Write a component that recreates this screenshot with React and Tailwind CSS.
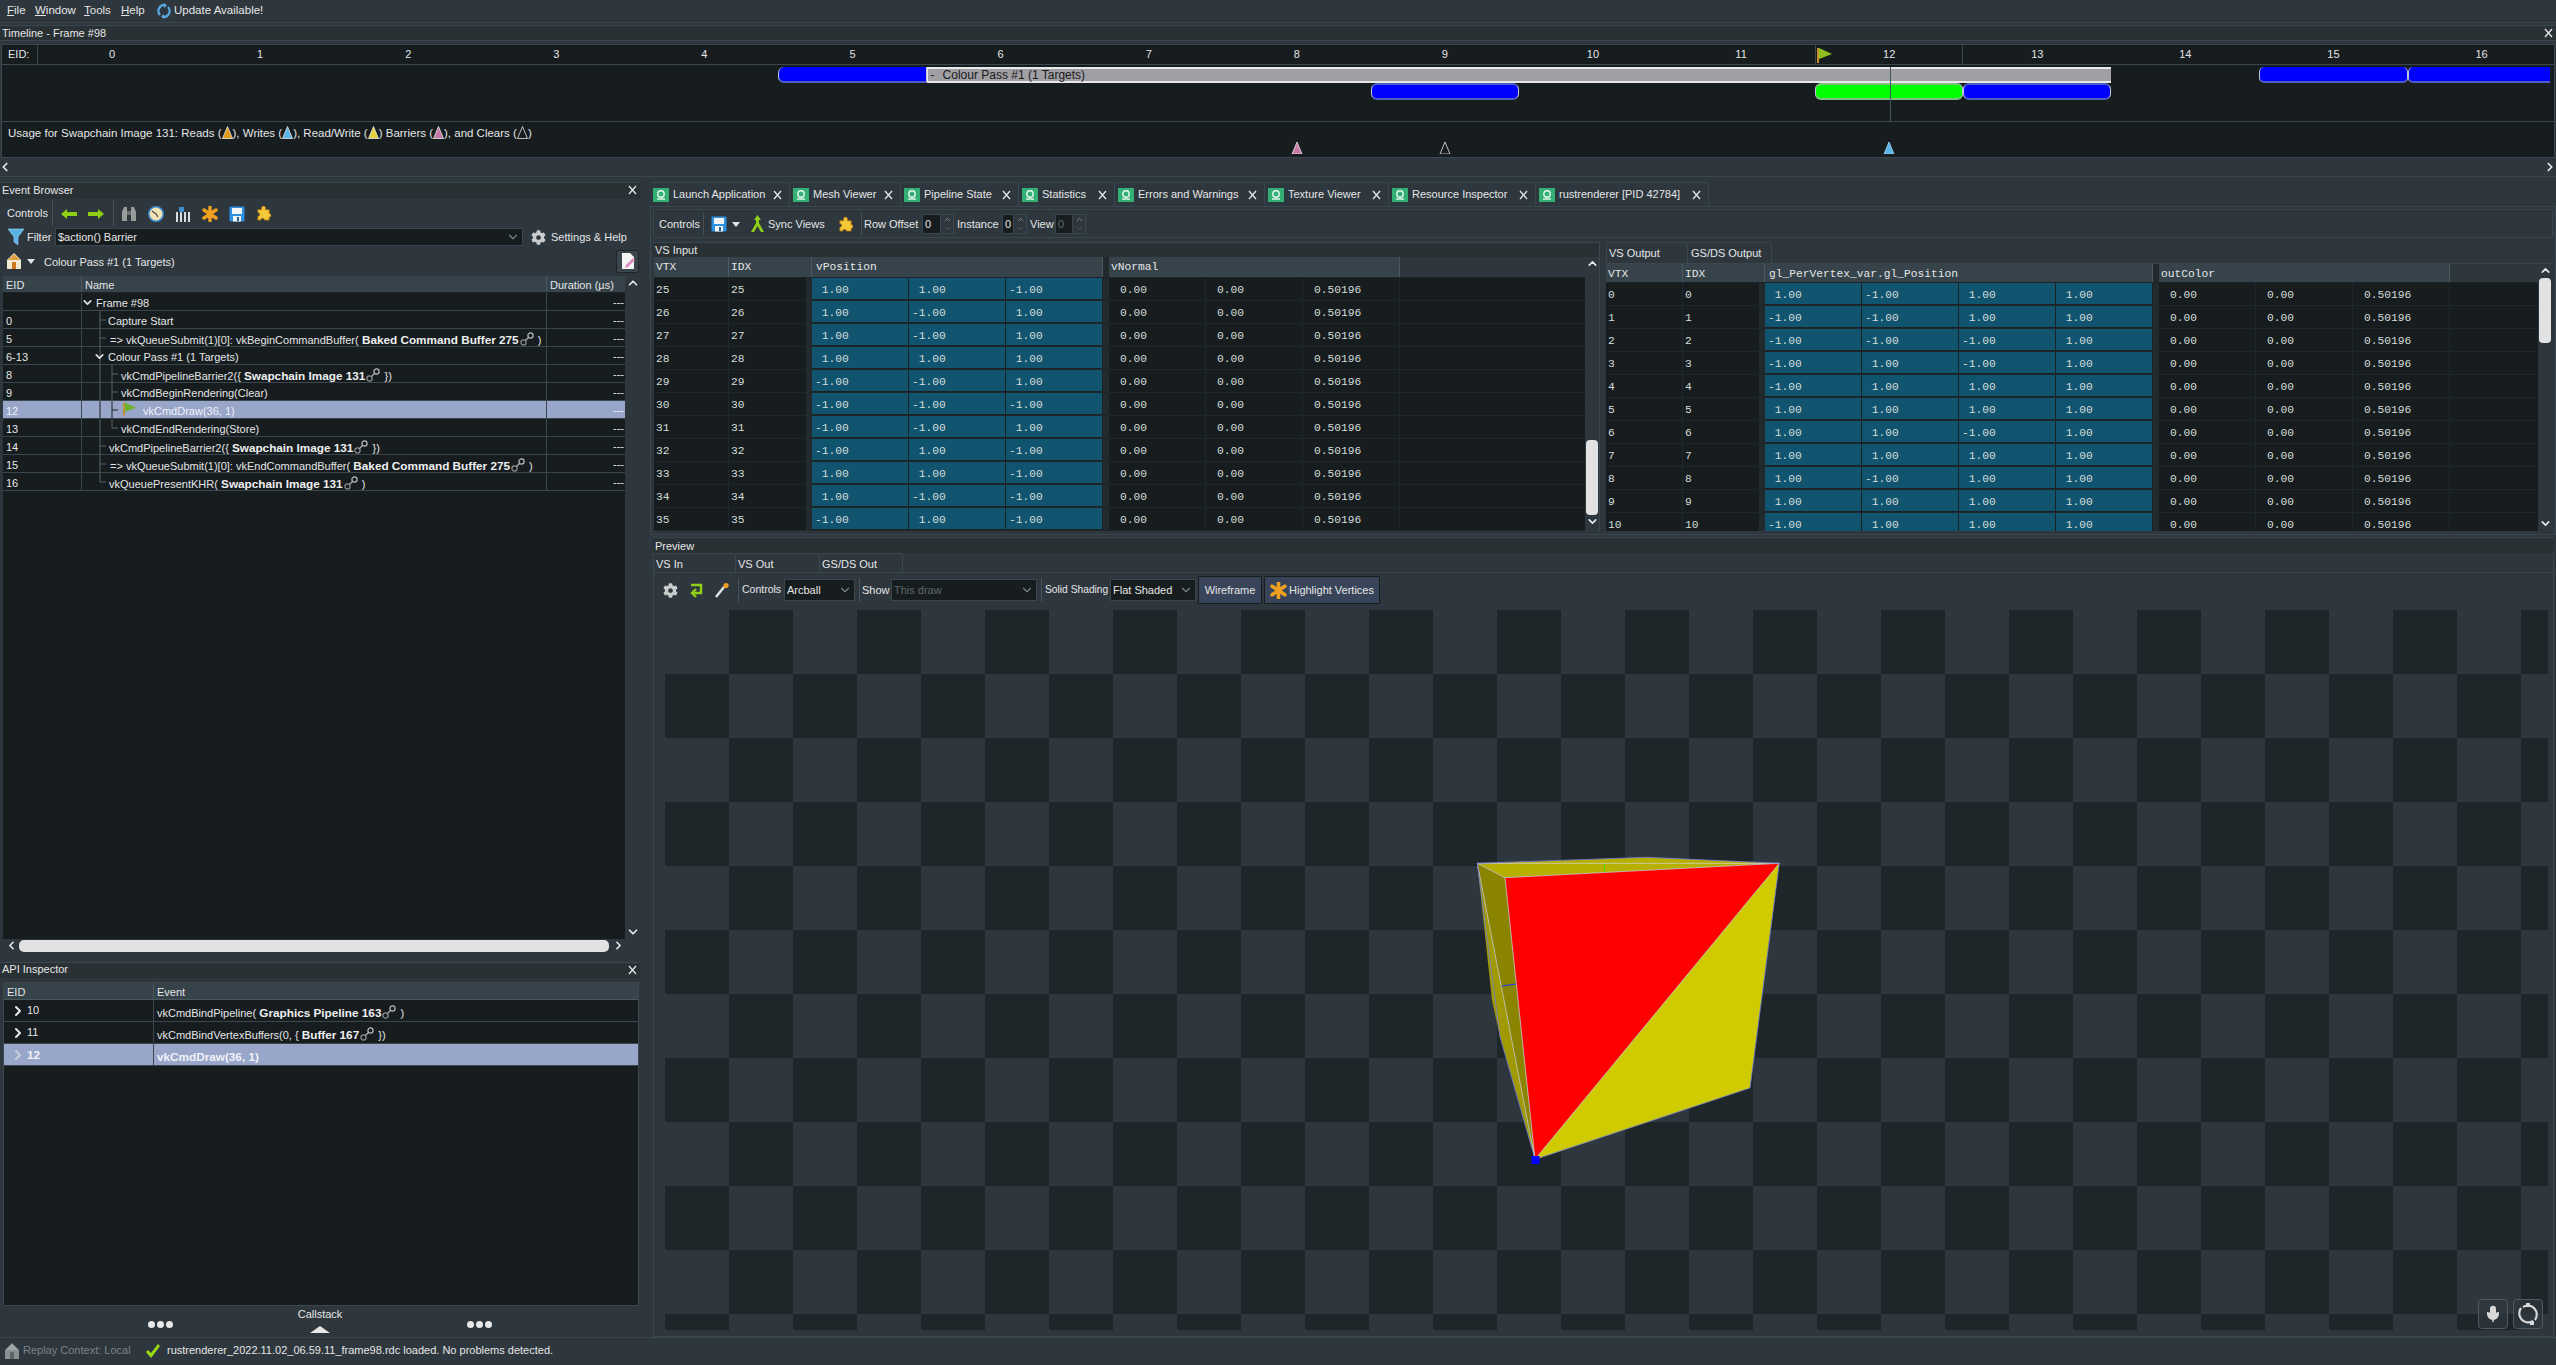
import React from "react";
import { ChevronDown, ChevronLeft, ChevronRight, ChevronUp, Mic } from "lucide-react";
import { FaCog } from "react-icons/fa";

// small drawn icons
const Arrow = ({ flip }) => (
  <svg width="16" height="10" viewBox="0 0 16 10" className={flip ? "-scale-x-100" : ""}>
    <path d="M0 5 L6 0 V3 H16 V7 H6 V10 Z" fill="#8fd014" />
  </svg>
);
const Binoculars = () => (
  <svg width="16" height="16" viewBox="0 0 16 16">
    <path d="M1 6 L3 1 H6 V15 H1 Z M10 1 H13 L15 6 V15 H10 Z" fill="#9a9c9c" />
    <path d="M6 5 H10 V9 H6 Z" fill="#6c6e6e" />
  </svg>
);
const Clock = () => (
  <svg width="16" height="16" viewBox="0 0 16 16">
    <circle cx="8" cy="8" r="7.2" fill="#f3e3b4" stroke="#3d8fd0" strokeWidth="1.6" />
    <path d="M4 5 L8 8 L10 11" stroke="#4a4a4a" strokeWidth="1.2" fill="none" />
  </svg>
);
const Bars = () => (
  <svg width="16" height="16" viewBox="0 0 16 16">
    <path d="M1 6 H3 V16 H1 Z M5 6 H7 V16 H5 Z M9 6 H11 V16 H9 Z M13 6 H15 V16 H13 Z" fill="#d8dcdc" />
    <path d="M4 1 H9 V5 L6.5 7 L4 5 Z" fill="#3d8fd0" />
  </svg>
);
const Star = ({ size = 16 }) => (
  <svg width={size} height={size} viewBox="0 0 16 16">
    <path d="M8 8 L8 1 M8 8 L14 4 M8 8 L14 12 M8 8 L8 15 M8 8 L2 12 M8 8 L2 4" stroke="#f0a020" strokeWidth="3.4" strokeLinecap="round" />
  </svg>
);
const Floppy = () => (
  <svg width="16" height="16" viewBox="0 0 16 16">
    <rect x="0.5" y="0.5" width="15" height="15" rx="1" fill="#2f8fe0" />
    <rect x="3" y="2" width="10" height="6" fill="#f2f4f6" />
    <rect x="4" y="10" width="8" height="5.5" fill="#f2f4f6" />
    <rect x="8" y="11" width="2" height="4" fill="#2a5c90" />
  </svg>
);
const Puzzle = () => (
  <svg width="15" height="15" viewBox="0 0 16 16">
    <path d="M6 2 a2 2 0 0 1 4 0 V4 H14 V8 a2 2 0 0 1 0 4 V15 H9 a2 2 0 0 0 -4 0 H2 V11 a2 2 0 0 0 0 -4 V4 H6 Z" fill="#f5c838" stroke="#b87a10" strokeWidth="0.8" />
  </svg>
);
const Funnel = () => (
  <svg width="16" height="18" viewBox="0 0 16 18">
    <path d="M0 1 H16 L10 9 V17 L6 14 V9 Z" fill="#5ab4e6" stroke="#9ad4f6" strokeWidth="0.6" />
  </svg>
);
const Home = ({ dim }) => (
  <svg width="14" height="16" viewBox="0 0 14 16">
    <path d="M7 0 L14 7 V16 H0 V7 Z" fill={dim ? "#8a8f92" : "#f0e8d0"} />
    <path d="M5 9 H9 V16 H5 Z" fill={dim ? "#5f6569" : "#d07820"} />
    <path d="M7 1 L13 7 H1 Z" fill={dim ? "#a0a5a8" : "#e0a040"} />
  </svg>
);
const Flag = ({ w = 16, h = 15, color = "#7cc020" }) => (
  <svg width={w} height={h} viewBox="0 0 16 15">
    <rect x="0" y="0" width="2" height="15" fill="#c89030" />
    <path d="M2 0 L15 6 L2 11 Z" fill={color} />
  </svg>
);
const LinkIcon = () => (
  <svg width="14" height="14" viewBox="0 0 14 14" className="inline-block -mt-[4px] mx-[1px] align-middle">
    <circle cx="10.5" cy="3.5" r="2.6" fill="none" stroke="#b8bcbe" strokeWidth="1.2" />
    <circle cx="3.5" cy="10.5" r="2.6" fill="none" stroke="#8c9092" strokeWidth="1.2" />
    <path d="M8.5 5.5 L5.5 8.5" stroke="#a8acae" strokeWidth="1.2" />
  </svg>
);
const Tri = ({ fill, stroke = "#e8e8e8" }) => (
  <svg width="11" height="13" viewBox="0 0 11 13" className="inline-block align-[-2px]">
    <path d="M5.5 0.5 L10.5 12.5 H0.5 Z" fill={fill} stroke={stroke} strokeWidth="0.8" />
  </svg>
);
const Marker = ({ fill, stroke, className }) => (
  <svg width="12" height="12" viewBox="0 0 12 12" className={className}>
    <path d="M6 0 L11 12 H1 Z" fill={fill} stroke={stroke} strokeWidth="0.8" />
  </svg>
);
const TabIcon = () => (
  <svg width="16" height="14" viewBox="0 0 16 14" className="shrink-0">
    <rect width="16" height="14" fill="#35b074" />
    <circle cx="8" cy="6" r="3.2" fill="none" stroke="#e8f8f0" strokeWidth="1.4" />
    <path d="M4 11 H12" stroke="#e8f8f0" strokeWidth="1.4" />
  </svg>
);
const Close = ({ className = "" }) => (
  <svg width="9" height="10" viewBox="0 0 9 10" className={className}>
    <path d="M1 1 L8 9 M8 1 L1 9" stroke="#e4e6e8" strokeWidth="1.3" />
  </svg>
);

const PanelTitle = ({ title, close, className = "" }) => (
  <div className={`flex items-center justify-between bg-[#2a3135] pl-[2px] pr-[3px] ${className}`}>
    <span>{title}</span>
    {close && <Close />}
  </div>
);

const B = ({ children }) => <b className="font-bold text-[11.75px] text-[#eef0f0]">{children}</b>;

// guide: what the tree lines in the Name column look like for this row
const eventRows = [
  { eid: "", text: "Frame #98", pad: 14, chevron: 5 },
  { eid: "0", text: "Capture Start", pad: 26, guide: "M18 0 V18 M18 9 H24" },
  { eid: "5", pad: 28, guide: "M18 0 V18 M18 9 H24", text: <>=&gt; vkQueueSubmit(1)[0]: vkBeginCommandBuffer(<B> Baked Command Buffer 275</B><LinkIcon /> )</> },
  { eid: "6-13", text: "Colour Pass #1 (1 Targets)", pad: 26, chevron: 17, guide: "M18 0 V18" },
  { eid: "8", pad: 39, guide: "M18 0 V18 M30 0 V18 M30 9 H36", text: <>vkCmdPipelineBarrier2({"{"} <B>Swapchain Image 131</B><LinkIcon /> {"}"})</> },
  { eid: "9", pad: 39, guide: "M18 0 V18 M30 0 V18 M30 9 H36", text: "vkCmdBeginRendering(Clear)" },
  { eid: "12", pad: 61, guide: "M18 0 V18 M30 0 V18 M30 9 H36", text: "vkCmdDraw(36, 1)", selected: true },
  { eid: "13", pad: 39, guide: "M18 0 V18 M30 0 V9 H36", text: "vkCmdEndRendering(Store)" },
  { eid: "14", pad: 27, guide: "M18 0 V18 M18 9 H24", text: <>vkCmdPipelineBarrier2({"{"} <B>Swapchain Image 131</B><LinkIcon /> {"}"})</> },
  { eid: "15", pad: 28, guide: "M18 0 V18 M18 9 H24", text: <>=&gt; vkQueueSubmit(1)[0]: vkEndCommandBuffer(<B> Baked Command Buffer 275</B><LinkIcon /> )</> },
  { eid: "16", pad: 27, guide: "M18 0 V9 H24", text: <>vkQueuePresentKHR(<B> Swapchain Image 131</B><LinkIcon /> )</> },
];

const EventRow = ({ row }) => (
  <div className={`flex h-[18px] border-b border-[#3b474e] ${row.selected ? "bg-[#98a6ca] text-[#f0f2f8]" : ""}`}>
    <div className="w-[79px] pl-[3px] border-r border-[#3b474e] leading-[21px] overflow-hidden">{row.eid}</div>
    <div className="relative w-[465px] border-r border-[#3b474e] leading-[21px]" style={{ paddingLeft: row.pad }}>
      {row.guide && (
        <svg width="40" height="18" className="absolute left-0 top-0">
          <path d={row.guide} stroke={row.selected ? "#1a2226" : "#56626a"} fill="none" />
        </svg>
      )}
      {row.chevron && (
        <ChevronDown size={13} strokeWidth={3} className="absolute top-[3px]" style={{ left: row.chevron - 6 }} />
      )}
      {row.selected && <span className="absolute left-[41px] top-[1px]"><Flag w={14} h={14} color="#6fb030" /></span>}
      {row.text}
    </div>
    <div className="flex-1 text-right pr-[1px] leading-[19px]">---</div>
  </div>
);

const apiRows = [
  { eid: "10", text: <>vkCmdBindPipeline(<B> Graphics Pipeline 163</B><LinkIcon /> )</> },
  { eid: "11", text: <>vkCmdBindVertexBuffers(0, {"{"} <B>Buffer 167</B><LinkIcon /> {"}"})</> },
  { eid: "12", text: "vkCmdDraw(36, 1)", selected: true },
];

const tabs = [
  ["Launch Application", "w-[140px]"],
  ["Mesh Viewer", "w-[111px]"],
  ["Pipeline State", "w-[118px]"],
  ["Statistics", "w-[96px]"],
  ["Errors and Warnings", "w-[150px]"],
  ["Texture Viewer", "w-[124px]"],
  ["Resource Inspector", "w-[147px]"],
  ["rustrenderer [PID 42784]", "w-[173px]"],
];

const fmt = (v) => (v < 0 ? "-1.00" : " 1.00");

const inputRows = [
  [25, 1, 1, -1], [26, 1, -1, 1], [27, 1, -1, 1], [28, 1, 1, 1], [29, -1, -1, 1], [30, -1, -1, -1],
  [31, -1, -1, 1], [32, -1, 1, -1], [33, 1, 1, -1], [34, 1, -1, -1], [35, -1, 1, -1],
];
const outputRows = [
  [0, 1, -1, 1], [1, -1, -1, 1], [2, -1, -1, -1], [3, -1, 1, -1], [4, -1, 1, 1], [5, 1, 1, 1],
  [6, 1, 1, -1], [7, 1, 1, 1], [8, 1, -1, 1], [9, 1, 1, 1], [10, -1, 1, 1],
];

const ColourCells = () => (
  <>
    <div className="w-[97px] pl-[11px] border-r border-[#20272b]">0.00</div>
    <div className="w-[97px] pl-[11px] border-r border-[#20272b]">0.00</div>
    <div className="w-[97px] pl-[11px] border-r border-[#20272b]">0.50196</div>
  </>
);

const BlueCell = ({ value }) => (
  <div className="w-[97px] pl-[3px] bg-[#115470] border-r border-b border-[#1a2226] whitespace-pre">{value}</div>
);

const MeshRow = ({ vtx, values, first, second }) => (
  <div className="flex h-[23px] shrink-0 leading-[25px] border-b border-[#20272b] font-['Liberation_Mono',monospace] text-[11.25px] text-[#d4dcd8]">
    <div className={`${first} pl-[2px] border-r border-[#20272b]`}>{vtx}</div>
    <div className={`${second} pl-[2px]`}>{vtx}</div>
    <div className="w-[6px] bg-[#232a2e]" />
    {values.map((v, i) => <BlueCell key={i} value={fmt(v)} />)}
    <div className="w-[6px] bg-[#232a2e]" />
    <ColourCells />
  </div>
);

const HeaderCell = ({ className = "", children }) => (
  <div className={`pl-[2px] pt-[2px] h-full border-r border-[#4a5860] ${className}`}>{children}</div>
);

const Scroll = ({ top, height, bottom }) => (
  <div className="w-[14px] shrink-0 flex flex-col items-center">
    <ChevronUp size={13} strokeWidth={3} className="text-[#e8e8e8] shrink-0" />
    <div style={{ marginTop: top, height }} className="w-[12px] bg-[#e2e2e2] rounded-[4px] shrink-0" />
    <ChevronDown size={13} strokeWidth={3} className="text-[#e8e8e8] shrink-0" style={{ marginTop: bottom }} />
  </div>
);

const Spin = ({ value, dim, className = "" }) => (
  <div className={`flex h-[20px] shrink-0 bg-[#171c1f] border border-[#3b474e] items-center pl-[2px] ${className}`}>
    <span className={`flex-1 ${dim ? "text-[#5f686d]" : ""}`}>{value}</span>
    <div className="w-[13px] h-full flex flex-col items-center justify-center bg-[#2f373e] border-l border-[#3b474e]">
      <ChevronUp size={9} className="text-[#9aa2a6]" />
      <ChevronDown size={9} className="text-[#5f686d]" />
    </div>
  </div>
);

const Sep = ({ className = "" }) => <div className={`w-px self-stretch my-[2px] bg-[#46535b] ${className}`} />;

const Combo = ({ label, dim, className = "" }) => (
  <div className={`flex items-center justify-between h-[22px] shrink-0 bg-[#171c1f] border border-[#3b474e] pl-[2px] pr-[2px] ${dim ? "text-[#5f686d]" : ""} ${className}`}>
    <span>{label}</span>
    <ChevronDown size={14} className="text-[#78848a]" />
  </div>
);

const Viewport = () => (
  <svg viewBox="665 610 1883 720" className="w-[1883px] h-[720px] block">
    <defs>
      <pattern id="checker" x="665" y="610" width="128" height="128" patternUnits="userSpaceOnUse">
        <rect x="64" y="0" width="64" height="64" fill="#1f2629" />
        <rect x="0" y="64" width="64" height="64" fill="#1f2629" />
      </pattern>
    </defs>
    <rect x="665" y="610" width="1883" height="720" fill="#2f373e" />
    <rect x="665" y="610" width="1883" height="720" fill="url(#checker)" />
    {/* the draw, seen through the arcball camera */}
    <polygon points="1477.3,863.3 1646.7,857.3 1779.3,863.3 1505,877.7" fill="#b8b000" />
    <polygon points="1477.3,863.3 1535,1159.3 1500,1036.7 1492,1000" fill="#a09a00" />
    <polygon points="1477.3,863.3 1505,877.7 1535,1159.3" fill="#8a8400" />
    <polygon points="1505,877.7 1779.3,863.3 1535,1159.3" fill="#ff0000" />
    <polygon points="1779.3,863.3 1750,1088 1540,1158 1535,1159.3" fill="#cfcb00" />
    <path d="M1477.3 863.3 L1505 877.7 L1779.3 863.3 L1477.3 863.3 L1535 1159.3 L1505 877.7 M1535 1159.3 L1779.3 863.3" stroke="#d0d0d0" strokeWidth="0.8" fill="none" />
    <path d="M1477.3 863.3 L1646.7 857.3 L1779.3 863.3 L1750 1088 L1535 1159.3 L1500 1036.7 Z" stroke="#7078e0" strokeWidth="0.8" fill="none" />
    <path d="M1502 986 L1516 984" stroke="#2030ff" strokeWidth="1" />
    <path d="M1604.5 864 V872" stroke="#40e000" strokeWidth="1" />
    <rect x="1531.5" y="1156" width="8" height="8" fill="#0000ff" />
  </svg>
);

const Dots = () => (
  <div className="flex gap-[2px] mt-[15px]">
    <span className="w-[7px] h-[7px] rounded-full bg-[#e8e8e8]" />
    <span className="w-[7px] h-[7px] rounded-full bg-[#e8e8e8]" />
    <span className="w-[7px] h-[7px] rounded-full bg-[#e8e8e8]" />
  </div>
);

const EventBrowser = () => (
  <div className="h-[774px] shrink-0 flex flex-col border-t border-[#3b474e]">
    <PanelTitle title="Event Browser" close className="h-[16px] pb-[2px] shrink-0" />
    <div className="h-[29px] shrink-0 flex items-center pl-[7px]">
      <span className="w-[45px]">Controls</span>
      <Sep className="mr-[8px]" />
      <div className="flex items-center gap-[11px]">
        <Arrow />
        <Arrow flip />
      </div>
      <Sep className="ml-[9px] mr-[7px]" />
      <div className="flex items-center gap-[11px]">
        <Binoculars />
        <Clock />
        <Bars />
        <Star />
        <Floppy />
        <Puzzle />
      </div>
    </div>
    <div className="h-[18px] shrink-0 flex items-center pl-[8px]">
      <Funnel />
      <span className="ml-[3px] w-[28px] shrink-0">Filter</span>
      <div className="w-[468px] h-[18px] flex items-center justify-between bg-[#171c1f] border border-[#3b474e] pl-[2px] pr-[2px]">
        <span>$action() Barrier</span>
        <ChevronDown size={14} className="text-[#78848a]" />
      </div>
      <FaCog className="ml-[8px] text-[#c8cccc] text-[15px]" />
      <span className="ml-[5px]">Settings &amp; Help</span>
    </div>
    <div className="h-[30px] shrink-0 flex items-center pl-[7px]">
      <Home />
      <span className="ml-[6px] w-0 h-0 border-x-[4px] border-x-transparent border-t-[5px] border-t-[#e4e6e8]" />
      <span className="ml-[9px] mt-[2px]">Colour Pass #1 (1 Targets)</span>
      <div className="ml-auto mr-[1px] w-[23px] h-[23px] flex items-center justify-center bg-[#3b454c] border border-[#1e2428] rounded-[2px]">
        <svg width="14" height="16" viewBox="0 0 14 16">
          <path d="M1 0 H9 L13 4 V16 H1 Z" fill="#f4f4f4" />
          <path d="M5 12 L12 5 L14 7 L7 14 L4 15 Z" fill="#e08ac0" />
        </svg>
      </div>
    </div>
    <div className="h-[663px] shrink-0 flex ml-[3px]">
      <div className="w-[622px] flex flex-col bg-[#171c1f]">
        <div className="flex h-[17px] bg-[#36434b] border-b border-[#1e2428] leading-[18px]">
          <div className="w-[79px] pl-[3px] border-r border-[#4a5860]">EID</div>
          <div className="w-[465px] pl-[3px] border-r border-[#4a5860]">Name</div>
          <div className="flex-1 pl-[3px]">Duration (µs)</div>
        </div>
        {eventRows.map((row, i) => <EventRow key={i} row={row} />)}
      </div>
      <div className="w-[14px] ml-px flex flex-col justify-between items-center">
        <ChevronUp size={14} strokeWidth={3} className="text-[#e8e8e8]" />
        <ChevronDown size={14} strokeWidth={3} className="text-[#e8e8e8]" />
      </div>
    </div>
    <div className="h-[13px] shrink-0 flex items-center ml-[3px] w-[622px]">
      <ChevronLeft size={13} strokeWidth={3} className="ml-[2px] text-[#e8e8e8]" />
      <div className="w-[591px] h-[12px] ml-[1px] bg-[#e2e2e2] rounded-[5px]" />
      <ChevronRight size={13} strokeWidth={3} className="ml-[3px] text-[#e8e8e8]" />
    </div>
  </div>
);

const ApiInspector = () => (
  <div className="mt-[6px] flex-1 flex flex-col border-t border-[#3b474e]">
    <PanelTitle title="API Inspector" close className="h-[15px] pb-[2px] shrink-0" />
    <div className="mt-[4px] ml-[3px] w-[636px] h-[324px] shrink-0 bg-[#171c1f] border border-[#3b474e]">
      <div className="flex h-[17px] bg-[#36434b] border-b border-[#4a5860] leading-[19px]">
        <div className="w-[150px] pl-[3px] border-r border-[#4a5860]">EID</div>
        <div className="flex-1 pl-[3px]">Event</div>
      </div>
      {apiRows.map((r) => (
        <div key={r.eid} className={`flex h-[22px] border-b border-[#3b474e] leading-[25px] ${r.selected ? "bg-[#98a6ca] text-[#f0f2f8] font-bold text-[11.75px]" : ""}`}>
          <div className="w-[150px] flex items-center border-r border-[#3b474e] pl-[6px]">
            <ChevronRight size={16} strokeWidth={3} className={r.selected ? "text-[#c8d0e0]" : "text-[#e8e8e8]"} />
            <span className="ml-[1px]">{r.eid}</span>
          </div>
          <div className="flex-1 pl-[3px]">{r.text}</div>
        </div>
      ))}
    </div>
    <div className="flex-1 flex items-start justify-center gap-[125px]">
      <Dots />
      <div className="flex flex-col items-center">
        <span className="mt-[1px] leading-[14px]">Callstack</span>
        <span className="mt-[5px] w-0 h-0 border-x-[10px] border-x-transparent border-b-[7px] border-b-[#e8e8e8]" />
      </div>
      <Dots />
    </div>
  </div>
);

const MeshToolbar = () => (
  <div className="mx-[2px] mt-[2px] h-[29px] shrink-0 flex items-center pl-[5px] pt-[1px] border border-[#3b474e] rounded-[2px]">
    <span className="w-[44px] shrink-0">Controls</span>
    <Sep className="mr-[7px]" />
    <Floppy />
    <span className="ml-[5px] w-0 h-0 border-x-[4px] border-x-transparent border-t-[5px] border-t-[#e4e6e8]" />
    <svg width="13" height="18" viewBox="0 0 13 18" className="ml-[11px]">
      <path d="M6.5 0 L10 5 H8 V8 L13 17 H10 L6.5 11 L3 17 H0 L5 8 V5 H3 Z" fill="#8fd014" />
    </svg>
    <span className="ml-[4px] w-[55px] shrink-0">Sync Views</span>
    <span className="ml-[15px]"><Puzzle /></span>
    <Sep className="ml-[8px] mr-[2px]" />
    <span className="w-[58px] shrink-0">Row Offset</span>
    <Spin value="0" className="w-[32px]" />
    <span className="ml-[3px] w-[45px] shrink-0">Instance</span>
    <Spin value="0" className="w-[25px]" />
    <span className="ml-[3px] w-[25px] shrink-0">View</span>
    <Spin value="0" dim className="w-[31px]" />
  </div>
);

const VsInput = () => (
  <div className="w-[948px] shrink-0 ml-[-1px] flex flex-col border-t border-x border-[#3b474e]">
    <PanelTitle title="VS Input" className="h-[14px] leading-[14px] shrink-0" />
    <div className="flex flex-1 min-h-0">
      <div className="w-[932px] ml-px flex flex-col bg-[#171c1f] overflow-hidden">
        <div className="flex h-[21px] shrink-0 items-center bg-[#36434b] border-b border-[#1e2428] font-['Liberation_Mono',monospace] text-[11.25px]">
          <HeaderCell className="w-[75px]">VTX</HeaderCell>
          <HeaderCell className="w-[83px]">IDX</HeaderCell>
          <HeaderCell className="w-[291px] pl-[4px]">vPosition</HeaderCell>
          <div className="w-[6px] bg-[#232a2e] h-full" />
          <HeaderCell className="w-[291px]">vNormal</HeaderCell>
          <div className="flex-1 h-full bg-[#2f373e]" />
        </div>
        {inputRows.map(([vtx, ...values]) => (
          <MeshRow key={vtx} vtx={vtx} values={values} first="w-[75px]" second="w-[77px]" />
        ))}
      </div>
      <Scroll top={170} height={75} bottom={0} />
    </div>
  </div>
);

const VsOutput = () => (
  <div className="flex-1 min-w-0 flex flex-col ml-[6px]">
    <div className="flex h-[21px] shrink-0">
      <div className="w-[82px] pl-[2px] leading-[21px] border border-b-0 border-[#3b474e] rounded-t-[3px]">VS Output</div>
      <div className="w-[84px] pl-[3px] leading-[21px] border border-b-0 border-l-0 border-[#3b474e] rounded-t-[3px]">GS/DS Output</div>
    </div>
    <div className="flex flex-1 min-h-0 border-t border-[#3b474e]">
      <div className="w-[932px] flex flex-col bg-[#171c1f] overflow-hidden">
        <div className="flex h-[19px] shrink-0 items-center bg-[#36434b] border-b border-[#1e2428] font-['Liberation_Mono',monospace] text-[11.25px]">
          <HeaderCell className="w-[77px]">VTX</HeaderCell>
          <HeaderCell className="w-[82px]">IDX</HeaderCell>
          <HeaderCell className="w-[388px] pl-[4px]">gl_PerVertex_var.gl_Position</HeaderCell>
          <div className="w-[6px] bg-[#232a2e] h-full" />
          <HeaderCell className="w-[291px]">outColor</HeaderCell>
          <div className="flex-1 h-full bg-[#2f373e]" />
        </div>
        {outputRows.map(([vtx, ...values]) => (
          <MeshRow key={vtx} vtx={vtx} values={[...values, 1]} first="w-[77px]" second="w-[76px]" />
        ))}
      </div>
      <Scroll top={1} height={65} bottom={174} />
    </div>
  </div>
);

const PreviewTab = ({ className = "", children }) => (
  <div className={`pl-[2px] leading-[20px] border border-b-0 border-l-0 border-[#3b474e] rounded-t-[3px] ${className}`}>{children}</div>
);

const Preview = () => (
  <div className="flex-1 mt-[2px] mr-[2px] ml-[3px] flex flex-col border-t border-[#3b474e]">
    <PanelTitle title="Preview" className="h-[15px] leading-[14px] shrink-0" />
    <div className="flex-1 flex flex-col border-r border-b border-l border-[#3b474e] relative">
      <div className="flex h-[20px] shrink-0 border-b border-[#3b474e]">
        <PreviewTab className="w-[82px]">VS In</PreviewTab>
        <PreviewTab className="w-[84px]">VS Out</PreviewTab>
        <PreviewTab className="w-[83px]">GS/DS Out</PreviewTab>
      </div>
      <div className="mt-[3px] h-[28px] shrink-0 flex items-center pl-[9px]">
        <FaCog className="text-[#c8cccc] text-[15px]" />
        <svg width="15" height="16" viewBox="0 0 15 16" className="ml-[11px]">
          <path d="M2 3 H12 V11 H4 M7 7 L3 11 L7 15" stroke="#8fd014" strokeWidth="2.4" fill="none" />
        </svg>
        <svg width="14" height="16" viewBox="0 0 14 16" className="ml-[11px]">
          <path d="M1 15 L9 5" stroke="#e4e4e4" strokeWidth="2.4" />
          <circle cx="11" cy="3.5" r="2.6" fill="#f0a020" />
        </svg>
        <Sep className="ml-[9px] mr-[3px]" />
        <span className="w-[42px] shrink-0 text-[10.5px]">Controls</span>
        <Combo label="Arcball" className="w-[71px]" />
        <Sep className="ml-[4px] mr-[2px]" />
        <span className="w-[29px] shrink-0">Show</span>
        <Combo label="This draw" dim className="w-[146px]" />
        <Sep className="ml-[4px] mr-[3px]" />
        <span className="w-[65px] shrink-0 text-[10.25px]">Solid Shading</span>
        <Combo label="Flat Shaded" className="w-[86px]" />
        <div className="ml-[2px] h-[28px] w-[64px] flex items-center justify-center bg-[#38445a] border border-[#171c1f] rounded-[1px]">Wireframe</div>
        <div className="ml-[2px] h-[28px] w-[116px] flex items-center justify-center gap-[2px] bg-[#38445a] border border-[#171c1f] rounded-[1px]">
          <Star size={17} />
          <span>Highlight Vertices</span>
        </div>
      </div>
      <div className="mt-[6px] ml-[11px]">
        <Viewport />
      </div>
      <div className="absolute right-[10px] bottom-[7px] flex gap-[5px]">
        <div className="w-[30px] h-[30px] flex items-center justify-center rounded-[4px] border border-[#51595e] bg-[#2f373e]/70">
          <Mic size={18} fill="#d8d8d8" className="text-[#d8d8d8]" />
        </div>
        <div className="w-[30px] h-[30px] flex items-center justify-center rounded-[4px] border border-[#51595e] bg-[#2f373e]/70">
          <svg width="22" height="22" viewBox="0 0 22 22">
            <path d="M6 4 A9 9 0 0 1 18 17 M16 18 A9 9 0 0 1 4 5" stroke="#d8d8d8" strokeWidth="2.2" fill="none" />
            <rect x="9" y="0" width="4" height="4" fill="#d8d8d8" />
            <rect x="13" y="18" width="4" height="4" fill="#d8d8d8" />
          </svg>
        </div>
      </div>
    </div>
  </div>
);

const Timeline = () => (
  <>
    <div className="mt-[2px] h-[16px] shrink-0 flex items-center justify-between bg-[#2a3135] border-y border-[#3b474e] pl-[2px] pr-[3px]">
      <span>Timeline - Frame #98</span>
      <Close />
    </div>
    <div className="mt-[3px] mx-[1px] h-[114px] shrink-0 bg-[#171c1f] border border-[#3b474e] relative overflow-hidden">
      <div className="flex h-[20px] border-b border-[#3b474e]">
        <div className="w-[36px] shrink-0 pl-[6px] leading-[19px] border-r border-[#3b474e]">EID:</div>
        <div className="grid grid-cols-[repeat(17,148.1px)] leading-[19px] text-center">
          {Array.from({ length: 17 }, (_, i) => (
            <div key={i} className={i === 12 ? "border-x border-[#3b474e]" : ""}>{i}</div>
          ))}
        </div>
      </div>
      <div className="h-[57px] border-b border-[#3b474e] pt-[2px] pl-[36px]">
        <div className="grid grid-cols-[repeat(17,148.1px)] grid-rows-[16px_17px] text-[#1a1a1a]">
          <div className="col-start-6 row-start-1 bg-[#0000ff] border-x border-[#c0c4e0] border-b-2 border-b-[#5060c0] rounded-l-[6px]" />
          <div className="col-start-7 col-end-15 row-start-1 flex items-center bg-[#a09fa4] border-y-2 border-[#e8e8e8] border-l border-l-[#e8e8e8] pl-[3px] text-[12px]">
            <span>-</span>
            <span className="ml-[8px]">Colour Pass #1 (1 Targets)</span>
          </div>
          <div className="col-start-16 row-start-1 bg-[#0000ff] border-x border-[#c0c4e0] border-b-2 border-b-[#5060c0] rounded-[5px]" />
          <div className="col-start-17 row-start-1 w-[142px] bg-[#0000ff] border-l border-[#c0c4e0] border-b-2 border-b-[#5060c0] rounded-l-[5px]" />
          <div className="col-start-10 row-start-2 bg-[#0000ff] border-x border-[#c0c4e0] border-y-2 border-y-[#5060c0] rounded-[6px]" />
          <div className="col-start-13 row-start-2 bg-[#00ff00] border-x border-[#c0c4e0] border-y-2 border-y-[#80c080] rounded-[6px]" />
          <div className="col-start-14 row-start-2 bg-[#0000ff] border-x border-[#c0c4e0] border-y-2 border-y-[#5060c0] rounded-[6px]" />
        </div>
      </div>
      <div className="pl-[6px] pt-[3px] text-[11.5px]">
        Usage for Swapchain Image 131: Reads (<Tri fill="#e09a1a" />), Writes (<Tri fill="#5ab4e6" />), Read/Write (<Tri fill="#e6d040" />) Barriers (<Tri fill="#c878a8" />), and Clears (<Tri fill="#171c1f" />)
      </div>
      {/* current event marker and usage markers sit over the tracks */}
      <div className="absolute left-[1815px] top-[3px]"><Flag w={16} h={15} color="#90c020" /></div>
      <div className="absolute left-[1888px] top-[22px] w-px h-[55px] bg-[#3f5866]" />
      <Marker fill="#c878a8" stroke="#e8e8e8" className="absolute left-[1289px] top-[97px]" />
      <Marker fill="#171c1f" stroke="#e8e8e8" className="absolute left-[1437px] top-[97px]" />
      <Marker fill="#5ab4e6" stroke="#a0d8f4" className="absolute left-[1881px] top-[97px]" />
    </div>
    <div className="h-[19px] shrink-0 flex items-center justify-between border-b border-[#3b474e]">
      <ChevronLeft size={14} strokeWidth={3} className="text-[#e8e8e8] -ml-[2px]" />
      <ChevronRight size={14} strokeWidth={3} className="text-[#e8e8e8] -mr-[1px]" />
    </div>
  </>
);

const App = () => {
  return (
    <div className="w-[2556px] h-[1365px] overflow-hidden flex flex-col bg-[#2f373e] text-[#e4e6e6] font-['Liberation_Sans',sans-serif] text-[11px] whitespace-nowrap">
      <div className="h-[23px] shrink-0 flex items-center pl-[7px] border-b border-[#3b474e] text-[11.5px]">
        <span className="w-[28px]"><u>F</u>ile</span>
        <span className="w-[49px]"><u>W</u>indow</span>
        <span className="w-[37px]"><u>T</u>ools</span>
        <span className="w-[36px]"><u>H</u>elp</span>
        <svg width="14" height="16" viewBox="0 0 14 16">
          <path d="M3 12 A6 6 0 0 1 8 2 M11 4 A6 6 0 0 1 6 14" stroke="#58a8e0" strokeWidth="2.2" fill="none" />
          <path d="M7 0 L10 2.5 L7 5 Z M7 11 L4 13.5 L7 16 Z" fill="#58a8e0" />
        </svg>
        <span className="ml-[3px]">Update Available!</span>
      </div>
      <Timeline />
      <div className="h-[1160px] shrink-0 flex pt-[5px]">
        <div className="w-[640px] shrink-0 flex flex-col">
          <EventBrowser />
          <ApiInspector />
        </div>
        <div className="flex-1 min-w-0 ml-[10px] flex flex-col">
          <div className="h-[24px] flex shrink-0">
            {tabs.map(([name, width]) => (
              <div key={name} className={`${width} shrink-0 flex items-center pl-[3px] pr-[7px] border border-l-0 border-b-0 border-[#3b474e] rounded-t-[3px]`}>
                <TabIcon />
                <span className="ml-[4px]">{name}</span>
                <Close className="ml-auto" />
              </div>
            ))}
          </div>
          <div className="h-[329px] shrink-0 flex flex-col border border-[#3b474e]">
            <MeshToolbar />
            <div className="mt-[4px] mx-[2px] flex h-[289px] shrink-0 overflow-hidden">
              <VsInput />
              <VsOutput />
            </div>
          </div>
          <Preview />
        </div>
      </div>
      <div className="flex-1 flex items-center pl-[5px] pb-[2px] border-t border-[#3b474e]">
        <Home dim />
        <span className="ml-[4px] w-[106px] shrink-0 text-[#7b8387]">Replay Context: Local</span>
        <svg width="16" height="14" viewBox="0 0 16 14" className="ml-[16px]">
          <path d="M1 8 L3 6 L6 9 L13 0 L15 2 L6 14 Z" fill="#9ad810" />
        </svg>
        <span className="ml-[6px]">rustrenderer_2022.11.02_06.59.11_frame98.rdc loaded. No problems detected.</span>
      </div>
    </div>
  );
};

export default App;
